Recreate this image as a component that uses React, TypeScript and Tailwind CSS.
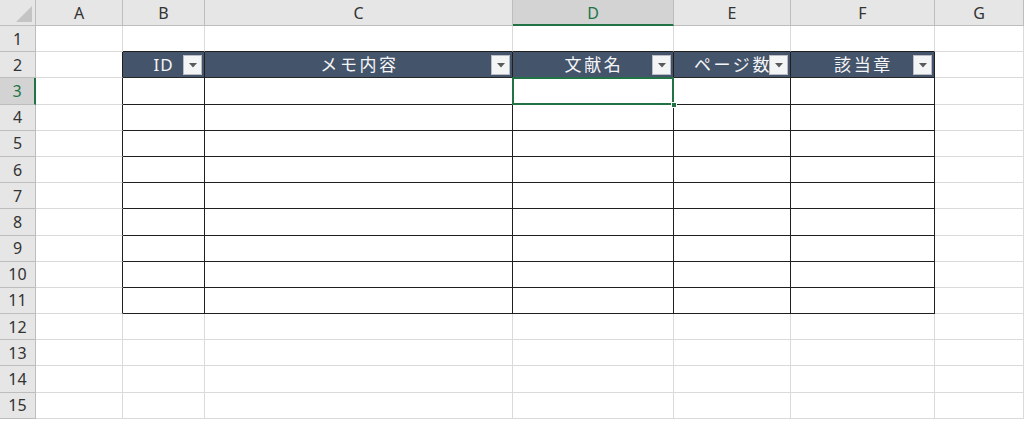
import React from "react";

const cols = ["A", "B", "C", "D", "E", "F", "G"];
const rows = Array.from({ length: 15 }, (_, i) => i + 1);
const headers: Record<string, string> = {
  B: "ID",
  C: "メモ内容",
  D: "文献名",
  E: "ページ数",
  F: "該当章",
};
const tableCols = ["B", "C", "D", "E", "F"];

function FilterButton() {
  return (
    <span className="absolute right-[2px] top-[3px] flex h-[20px] w-[19px] items-center justify-center border border-[#b9bcc2] bg-[#f3f4f6]">
      <svg width="8" height="5" viewBox="0 0 8 5">
        <path d="M0 0h8L4 4.5z" fill="#595959" />
      </svg>
    </span>
  );
}

function Cell({ col, row }: { col: string; row: number }) {
  const inTable = tableCols.includes(col) && row >= 2 && row <= 11;
  const isHead = inTable && row === 2;
  const leftOfTable = col === "A" && row >= 2 && row <= 11;
  const aboveTable = tableCols.includes(col) && row === 1;
  const selected = col === "D" && row === 3;

  let cls = "relative border-r border-b border-r-[#dadada] border-b-[#dadada] bg-white";
  if (inTable) cls = "relative border-r border-b border-r-[#1f1f1f] border-b-[#1f1f1f] bg-white";
  if (isHead) cls = "relative border-r border-b border-r-[#1f1f1f] border-b-[#262626] bg-[#44546a] overflow-hidden";
  if (leftOfTable) cls = "relative border-r border-b border-r-[#1f1f1f] border-b-[#dadada] bg-white";
  if (aboveTable) cls = "relative border-r border-b border-r-[#dadada] border-b-[#1f1f1f] bg-white";

  return (
    <div className={cls}>
      {isHead && (
        <>
          <div
            className={
              col === "B"
                ? "flex h-full items-center justify-center whitespace-nowrap text-[17px] tracking-[1px] text-[#f4f5f7]"
                : "flex h-full items-center justify-center whitespace-nowrap pl-[2px] text-[17px] tracking-[2.6px] text-[#f4f5f7]"
            }
          >
            {headers[col]}
          </div>
          <FilterButton />
        </>
      )}
      {selected && (
        <>
          <div className="absolute -left-[1px] -top-[1px] -right-[1px] -bottom-[1px] z-10 border-2 border-[#217346]" />
          <div className="absolute -right-[4px] -bottom-[4px] z-20 h-[6px] w-[6px] border border-white bg-[#217346]" />
        </>
      )}
    </div>
  );
}

export default function App() {
  return (
    <div
      className="grid h-[421px] w-[1024px] overflow-hidden bg-white"
      style={{ fontFamily: '"Noto Sans", "Noto Sans CJK JP", sans-serif' }}
    >
      <div
        className="grid"
        style={{
          gridTemplateColumns: "36px 87px 82px 308px 161px 117px 144px 89px",
          gridTemplateRows: "26px repeat(15, 26.2px)",
        }}
      >
        <div className="relative border-r border-b border-[#bdbdbd] bg-[#e6e6e6]">
          <svg className="absolute right-[3px] bottom-[3px]" width="16" height="16" viewBox="0 0 16 16">
            <path d="M16 0V16H0z" fill="#c4c4c4" />
          </svg>
        </div>
        {cols.map((c) =>
          c === "D" ? (
            <div
              key={c}
              className="flex items-center justify-center border-r border-r-[#bdbdbd] border-b-2 border-b-[#217346] bg-[#d3d3d3] pt-[2px] text-[16px] text-[#217346]"
            >
              {c}
            </div>
          ) : (
            <div
              key={c}
              className="flex items-center justify-center border-r border-b border-[#bdbdbd] bg-[#e6e6e6] text-[16px] text-[#333333]"
            >
              {c}
            </div>
          )
        )}
        {rows.map((r) => (
          <React.Fragment key={r}>
            {r === 3 ? (
              <div className="flex items-center justify-center border-r-2 border-r-[#217346] border-b border-b-[#bdbdbd] bg-[#d3d3d3] text-[16px] text-[#217346]">
                {r}
              </div>
            ) : (
              <div className="flex items-center justify-center border-r border-b border-[#bdbdbd] bg-[#e6e6e6] text-[16px] text-[#333333]">
                {r}
              </div>
            )}
            {cols.map((c) => (
              <Cell key={c} col={c} row={r} />
            ))}
          </React.Fragment>
        ))}
      </div>
    </div>
  );
}
